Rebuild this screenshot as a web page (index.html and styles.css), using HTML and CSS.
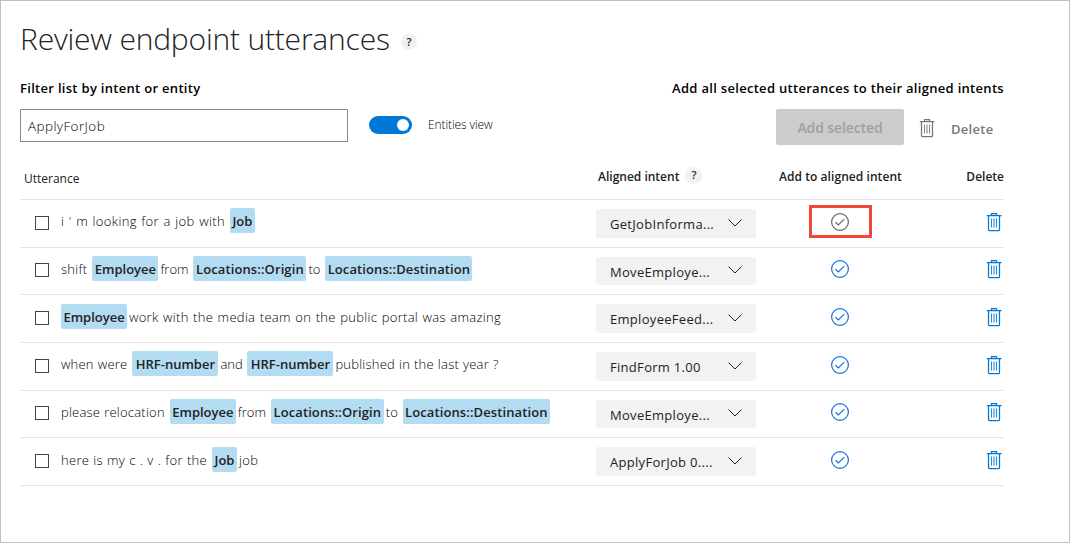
FILE: index.html
```html
<!DOCTYPE html>
<html lang="en">
<head>
<meta charset="utf-8">
<title>Review endpoint utterances</title>
<link rel="stylesheet" href="styles.css">
</head>
<body>
<svg class="defs" width="0" height="0">
  <symbol id="trash" viewBox="0 0 16 19">
    <path d="M.8 2.500h14.700M5.500 2.500V.5h5v2M2.500 2.500v14.200q0 .8.8.8h9.400q.8 0 .8-.8V2.500" fill="none" stroke="currentColor" stroke-width="1.25"/>
    <path d="M5.500 5.500v9M8 5.500v9M10.500 5.500v9" fill="none" stroke="currentColor" stroke-width="1.1" opacity=".85"/>
  </symbol>
  <symbol id="check" viewBox="0 0 18 18">
    <circle cx="9" cy="9" r="8.400" fill="none" stroke="currentColor" stroke-width="1.2"/>
    <path d="M4.500 9.300l2.800 2.600 6-5.800" fill="none" stroke="currentColor" stroke-width="1.2"/>
  </symbol>
  <symbol id="chevron" viewBox="0 0 14 8">
    <path d="M.5.5L7 7l6.500-6.500" fill="none" stroke="currentColor" stroke-width="1"/>
  </symbol>
</svg>
<main class="page">
  <header class="heading">
    <h1 class="title">Review endpoint utterances</h1>
    <span class="help">?</span>
  </header>
  <div class="labels">
    <label class="label-filter" for="filter">Filter list by intent or entity</label>
    <span class="label-add">Add all selected utterances to their aligned intents</span>
  </div>
  <div class="toolbar">
    <div class="filter" id="filter">ApplyForJob</div>
    <span class="toggle"><span class="knob"></span></span>
    <span class="toggle-label">Entities view</span>
    <button class="add-button" disabled>Add selected</button>
    <svg class="trash muted"><use href="#trash"/></svg>
    <span class="delete-all">Delete</span>
  </div>
  <section class="table">
    <div class="row head">
      <span class="h-utterance">Utterance</span>
      <span class="h-intent">Aligned intent <span class="help small">?</span></span>
      <span class="h-add">Add to aligned intent</span>
      <span class="h-delete">Delete</span>
    </div>
    <div class="row">
      <span class="box"></span>
      <div class="utterance wide"><span>i ' m looking for a job with</span><b class="job">Job</b></div>
      <div class="select"><span>GetJobInforma...</span><svg class="chevron"><use href="#chevron"/></svg></div>
      <div class="add marked"><svg class="check"><use href="#check"/></svg></div>
      <svg class="trash"><use href="#trash"/></svg>
    </div>
    <div class="row short">
      <span class="box"></span>
      <div class="utterance"><span>shift</span><b class="employee">Employee</b><span class="joiner">from</span><b class="origin">Locations::Origin</b><span class="joiner last">to</span><b class="destination">Locations::Destination</b></div>
      <div class="select"><span>MoveEmploye...</span><svg class="chevron"><use href="#chevron"/></svg></div>
      <div class="add"><svg class="check"><use href="#check"/></svg></div>
      <svg class="trash"><use href="#trash"/></svg>
    </div>
    <div class="row">
      <span class="box"></span>
      <div class="utterance low"><b class="employee">Employee</b><span>work with the media team on the public portal was amazing</span></div>
      <div class="select"><span>EmployeeFeed...</span><svg class="chevron"><use href="#chevron"/></svg></div>
      <div class="add"><svg class="check"><use href="#check"/></svg></div>
      <svg class="trash"><use href="#trash"/></svg>
    </div>
    <div class="row">
      <span class="box"></span>
      <div class="utterance tight"><span>when were</span><b class="hrf">HRF-number</b><span class="joiner">and</span><b class="hrf">HRF-number</b><span>published in the last year ?</span></div>
      <div class="select"><span>FindForm 1.00</span><svg class="chevron"><use href="#chevron"/></svg></div>
      <div class="add"><svg class="check"><use href="#check"/></svg></div>
      <svg class="trash"><use href="#trash"/></svg>
    </div>
    <div class="row short">
      <span class="box"></span>
      <div class="utterance tight"><span>please relocation</span><b class="employee">Employee</b><span class="joiner">from</span><b class="origin">Locations::Origin</b><span class="joiner last">to</span><b class="destination">Locations::Destination</b></div>
      <div class="select"><span>MoveEmploye...</span><svg class="chevron"><use href="#chevron"/></svg></div>
      <div class="add"><svg class="check"><use href="#check"/></svg></div>
      <svg class="trash"><use href="#trash"/></svg>
    </div>
    <div class="row">
      <span class="box"></span>
      <div class="utterance low dotted"><span>here is my c . v . for the</span><b class="job">Job</b><span>job</span></div>
      <div class="select"><span>ApplyForJob 0....</span><svg class="chevron"><use href="#chevron"/></svg></div>
      <div class="add"><svg class="check"><use href="#check"/></svg></div>
      <svg class="trash"><use href="#trash"/></svg>
    </div>
  </section>
</main>
</body>
</html>
```
FILE: styles.css
```css
* { box-sizing: border-box; }
body {
  margin: 0;
  font-family: "Open Sans", "Noto Sans", sans-serif;
  font-size: 13px;
  color: #222;
  background: #fff;
}
.defs { display: block; }
.page {
  height: 543px;
  padding: 19px 65px 0 19px;
  border: 1px solid #c0c0c0;
  overflow: hidden;
  white-space: nowrap;
}
.heading { display: flex; height: 42px; }
.title {
  margin: 0;
  width: 381px;
  font-size: 30px;
  font-weight: 300;
  line-height: 38px;
  letter-spacing: -.2px;
}
.help {
  width: 16px;
  height: 16px;
  margin-top: 14px;
  border-radius: 50%;
  background: #f1f1f1;
  font-size: 11px;
  font-weight: 600;
  line-height: 16px;
  text-align: center;
}
.labels {
  display: flex;
  justify-content: space-between;
  height: 47px;
  padding-top: 16px;
  line-height: 20px;
  font-weight: 600;
  letter-spacing: .3px;
  color: #000;
}
.toolbar { display: flex; height: 49px; }
.filter {
  width: 328px;
  height: 33px;
  padding-left: 7px;
  border: 1px solid #8a8a8a;
  line-height: 33px;
  font-size: 13.5px;
  font-weight: 300;
  letter-spacing: .4px;
  color: #000;
}
.toggle {
  width: 43px;
  height: 18px;
  margin: 7px 0 0 21px;
  padding: 3px;
  border-radius: 9px;
  background: #0078d7;
}
.knob {
  display: block;
  width: 12px;
  height: 12px;
  margin-left: 25px;
  border-radius: 50%;
  background: #fff;
}
.toggle-label {
  width: 364px;
  padding-left: 16px;
  line-height: 32px;
  font-size: 12px;
  font-weight: 300;
  letter-spacing: -.1px;
  color: #000;
}
.add-button {
  width: 128px;
  height: 36px;
  padding: 0;
  border: 0;
  border-radius: 2px;
  background: #ccc;
  color: #a0a0a0;
  font: 600 14px "Open Sans", sans-serif;
  letter-spacing: -.1px;
}
.trash {
  display: block;
  width: 16px;
  height: 19px;
  color: #0078d7;
}
.trash.muted { margin: 10px 0 0 15px; color: #777; }
.delete-all {
  margin-left: 16px;
  line-height: 40px;
  font-weight: 600;
  letter-spacing: .3px;
  color: #767676;
}
.row {
  display: grid;
  grid-template-columns: 15px 26px 535px 160px 167px 1fr;
  height: 48px;
  border-bottom: 1px solid #e3e3e3;
}
.row.short { height: 47px; }
.row.head {
  grid-template-columns: 578px 181px 123px 1fr;
  height: 42px;
  line-height: 18px;
  padding-top: 10px;
  font-size: 12px;
}
.h-utterance { padding: 2px 0 0 4px; font-weight: 500; }
.h-intent { display: flex; gap: 6px; font-weight: 600; }
.help.small { width: 17px; height: 17px; margin-top: -1px; line-height: 16px; }
.h-add, .h-delete { font-weight: 600; }
.h-add { letter-spacing: .06px; }
.h-delete { text-align: right; }
.box {
  grid-column: 2;
  width: 14px;
  height: 14px;
  margin-top: 16px;
  border: 1px solid #444;
}
.short .box { margin-top: 15px; }
.utterance {
  display: flex;
  height: 25px;
  margin-top: 8px;
  line-height: 27px;
  font-weight: 300;
  color: #000;
}
.utterance.low { margin-top: 9px; }
.utterance span { letter-spacing: .3px; word-spacing: .8px; }
.utterance.wide span { letter-spacing: .35px; }
.utterance.tight span { letter-spacing: .22px; word-spacing: .4px; }
.utterance.dotted span { word-spacing: .45px; }
.utterance .joiner,
.utterance.tight .joiner { width: 30px; letter-spacing: 0; }
.utterance .joiner.last,
.utterance.tight .joiner.last { width: 12px; }
.utterance b {
  border-radius: 2px;
  background: #b3dbf2;
  color: #222;
  font-weight: 600;
  text-align: center;
}
.utterance span + b { margin-left: 5px; }
.utterance b + span { margin-left: 2px; }
.utterance .joiner + .hrf { margin-left: -3px; }
.utterance .joiner + .origin { margin-left: 3px; }
.job { width: 25px; }
.employee { width: 66px; }
.origin { width: 113px; }
.destination { width: 147px; }
.hrf { width: 86px; }
.utterance .origin, .utterance .destination { letter-spacing: .1px; }
.select {
  display: flex;
  justify-content: space-between;
  height: 29px;
  margin-top: 9px;
  padding: 0 14px;
  border-radius: 2px;
  background: #f2f2f2;
  line-height: 30px;
  letter-spacing: .3px;
}
.short .select { height: 28px; }
.chevron { width: 14px; height: 8px; margin-top: 10px; }
.short .chevron { margin-top: 9px; }
.add {
  width: 63px;
  height: 33px;
  margin: 5px 0 0 53px;
  padding: 5px 19px;
  border: 3px solid transparent;
  color: #1a6fd8;
}
.short .add { margin-top: 4px; }
.add.marked { border-color: #ee4836; color: #666; }
.check { display: block; width: 18px; height: 18px; }
.row > .trash { justify-self: end; margin: 13px 2px 0 0; }
.row.short > .trash { margin-top: 12px; }
```
